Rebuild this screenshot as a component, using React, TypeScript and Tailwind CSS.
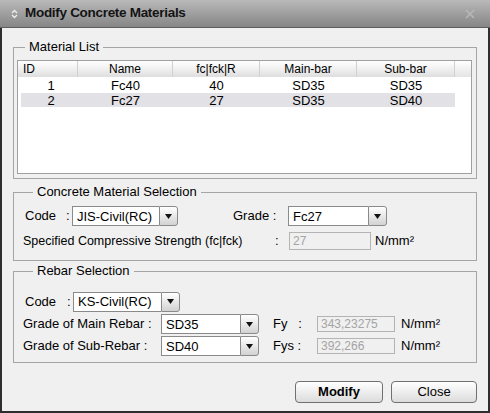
import React from 'react';

const font = { fontFamily: '"Liberation Sans", Arial, sans-serif' };

function Combo({ value, className }: { value: string; className: string }) {
  return (
    <div className={`flex h-[20px] ${className}`}>
      <div className="flex-1 flex items-center bg-white border border-[#8a8a8a] border-r-0 pl-[4px] text-[13px] text-black leading-none">
        {value}
      </div>
      <div className="w-[19px] flex items-center justify-center rounded-r-[3px] border border-[#8a8a8a] bg-gradient-to-b from-[#ffffff] to-[#d2d2d2]">
        <svg width="7" height="5" viewBox="0 0 7 5">
          <path d="M0 0 H7 L3.5 5 Z" fill="#111" />
        </svg>
      </div>
    </div>
  );
}

function ReadOnlyBox({ value, className }: { value: string; className: string }) {
  return (
    <div className={`flex items-center bg-[#f0f0f0] border border-[#b4b4b4] pl-[3px] text-[12px] text-[#a4a4a4] leading-none ${className}`}>
      {value}
    </div>
  );
}

const cols = [
  { label: 'ID', w: 'w-[60px]', align: 'justify-start pl-[5px]' },
  { label: 'Name', w: 'w-[95px]', align: 'justify-center' },
  { label: 'fc|fck|R', w: 'w-[87px]', align: 'justify-center' },
  { label: 'Main-bar', w: 'w-[97px]', align: 'justify-center' },
  { label: 'Sub-bar', w: 'w-[98px]', align: 'justify-center' },
];

const rows = [
  ['1', 'Fc40', '40', 'SD35', 'SD35'],
  ['2', 'Fc27', '27', 'SD35', 'SD40'],
];

export default function App() {
  return (
    <div className="w-[490px] h-[413px] bg-[#2e2e2e] px-[2px] pb-[2px] flex flex-col text-black" style={font}>
      <div className="h-[28px] flex items-center bg-gradient-to-b from-[#b9b9b9] to-[#868686] border-b border-[#5c5c5c] -mx-[2px] px-[11px]">
        <svg width="7" height="10" viewBox="0 0 7 10" className="mr-[7px]">
          <path d="M1 4 L3.5 1.5 L6 4 M1 6 L3.5 8.5 L6 6" stroke="#eeeeee" strokeWidth="1.3" fill="none" />
        </svg>
        <span className="text-[13.5px] font-bold text-[#141414] tracking-[-0.3px]">Modify Concrete Materials</span>
        <svg width="10" height="10" viewBox="0 0 10 10" className="ml-auto mr-[4px]">
          <path d="M1 1 L9 9 M9 1 L1 9" stroke="#b8b8b8" strokeWidth="1.6" />
        </svg>
      </div>

      <div className="flex-1 bg-[#f0f0f0] px-[11px] flex flex-col">
        <fieldset className="mt-[11px] h-[140px] border border-[#a5a5a5] pl-[3px] pr-[4px] pb-[5px]">
          <legend className="ml-[8px] px-[4px] text-[13px] leading-[16px]">Material List</legend>
          <div className="mt-[5px] h-[114px] bg-white border border-[#a0a0a0]">
            <div className="flex h-[16px] bg-gradient-to-b from-[#fdfdfd] to-[#e2e2e2]">
              {cols.map((c) => (
                <div key={c.label} className={`${c.w} flex items-center ${c.align} text-[12px] leading-none border-r border-[#d0d0d0] bg-gradient-to-b from-[#ffffff] via-[#f0f0f0] to-[#dedede]`}>
                  {c.label}
                </div>
              ))}
              <div className="flex-1 bg-gradient-to-b from-[#ffffff] to-[#e4e4e4]" />
            </div>
            {rows.map((r, i) => (
              <div key={i} className={`flex h-[14px] mt-[1px] ml-[3px] w-[434px] ${i === 1 ? 'bg-[#e1e1e6]' : ''}`}>
                {r.map((v, j) => (
                  <div key={j} className={`${cols[j].w} ${j === 0 ? '-ml-[3px]' : ''} flex items-center justify-center text-[13px] leading-none`}>
                    {j === 0 ? <span className="w-[60px] pl-[6px] text-center">{v}</span> : v}
                  </div>
                ))}
              </div>
            ))}
          </div>
        </fieldset>

        <fieldset className="mt-[5px] h-[77px] border border-[#a5a5a5] pl-[11px]">
          <legend className="ml-[8px] px-[4px] text-[13px] leading-[16px]">Concrete Material Selection</legend>
          <div className="flex items-center mt-[6px] h-[20px]">
            <span className="text-[13px] w-[41px]">Code</span>
            <span className="text-[13px] w-[6px]">:</span>
            <Combo value="JIS-Civil(RC)" className="w-[106px]" />
            <span className="text-[13px] ml-[55px] w-[55px]">Grade :</span>
            <Combo value="Fc27" className="w-[99px]" />
          </div>
          <div className="flex items-center mt-[6px] h-[18px] -ml-[2px]">
            <span className="text-[12.5px] w-[252px] whitespace-nowrap">Specified Compressive Strength (fc|fck)</span>
            <span className="text-[13px] w-[14px]">:</span>
            <ReadOnlyBox value="27" className="w-[82px] h-[18px]" />
            <span className="text-[13px] ml-[4px]">N/mm²</span>
          </div>
        </fieldset>

        <fieldset className="mt-[2px] h-[100px] border border-[#a5a5a5] pl-[11px]">
          <legend className="ml-[8px] px-[4px] text-[13px] leading-[16px]">Rebar Selection</legend>
          <div className="flex items-center mt-[13px] h-[19px]">
            <span className="text-[13px] w-[42px]">Code</span>
            <span className="text-[13px] w-[6px]">:</span>
            <Combo value="KS-Civil(RC)" className="w-[107px] h-[19px]" />
          </div>
          <div className="flex items-center mt-[3px] h-[20px] -ml-[2px]">
            <span className="text-[13px] w-[138px] whitespace-nowrap">Grade of Main Rebar :</span>
            <Combo value="SD35" className="w-[98px]" />
            <span className="text-[13px] ml-[14px] w-[44px]">Fy&nbsp;&nbsp;&nbsp;:</span>
            <ReadOnlyBox value="343,23275" className="w-[78px] h-[16px]" />
            <span className="text-[13px] ml-[6px]">N/mm²</span>
          </div>
          <div className="flex items-center mt-[2px] h-[20px] -ml-[2px]">
            <span className="text-[13px] w-[138px] whitespace-nowrap">Grade of Sub-Rebar :</span>
            <Combo value="SD40" className="w-[98px]" />
            <span className="text-[13px] ml-[14px] w-[44px]">Fys :</span>
            <ReadOnlyBox value="392,266" className="w-[78px] h-[16px]" />
            <span className="text-[13px] ml-[6px]">N/mm²</span>
          </div>
        </fieldset>

        <div className="flex justify-end gap-[8px] mt-[18px]">
          <button className="w-[88px] h-[22px] rounded-[4px] border border-[#707070] bg-gradient-to-b from-[#ffffff] to-[#dcdcdc] text-[13px] font-bold">
            Modify
          </button>
          <button className="w-[86px] h-[22px] rounded-[4px] border border-[#707070] bg-gradient-to-b from-[#ffffff] to-[#dcdcdc] text-[13px]">
            Close
          </button>
        </div>
      </div>
    </div>
  );
}
